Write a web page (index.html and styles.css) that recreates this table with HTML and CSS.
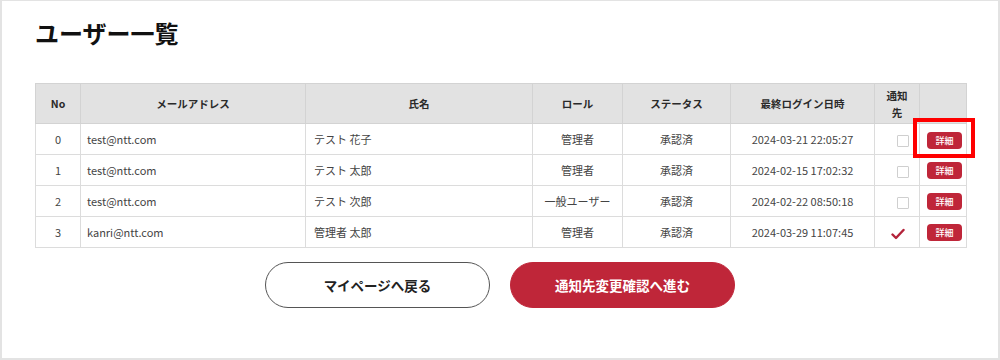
FILE: index.html
```html
<!DOCTYPE html>
<html lang="ja">
<head>
<meta charset="utf-8">
<title>ユーザー一覧</title>
<link rel="stylesheet" href="styles.css">
</head>
<body>
<div class="frame">
  <h1 class="title">ユーザー一覧</h1>
  <table class="users">
    <colgroup>
      <col class="c-no"><col class="c-mail"><col class="c-name"><col class="c-role"><col class="c-status"><col class="c-login"><col class="c-notify"><col class="c-btn">
    </colgroup>
    <thead>
      <tr>
        <th>No</th><th>メールアドレス</th><th>氏名</th><th>ロール</th><th>ステータス</th><th>最終ログイン日時</th><th>通知<br>先</th><th></th>
      </tr>
    </thead>
    <tbody>
      <tr>
        <td class="center">0</td><td class="mail">test@ntt.com</td><td class="name">テスト 花子</td><td class="center">管理者</td><td class="center">承認済</td><td class="center">2024-03-21 22:05:27</td><td class="center"><span class="check"></span></td><td class="btn-cell"><span class="detail-wrap"><button class="detail">詳細</button><span class="highlight"></span></span></td>
      </tr>
      <tr>
        <td class="center">1</td><td class="mail">test@ntt.com</td><td class="name">テスト 太郎</td><td class="center">管理者</td><td class="center">承認済</td><td class="center">2024-02-15 17:02:32</td><td class="center"><span class="check"></span></td><td class="btn-cell"><button class="detail">詳細</button></td>
      </tr>
      <tr>
        <td class="center">2</td><td class="mail">test@ntt.com</td><td class="name">テスト 次郎</td><td class="center">一般ユーザー</td><td class="center">承認済</td><td class="center">2024-02-22 08:50:18</td><td class="center"><span class="check"></span></td><td class="btn-cell"><button class="detail">詳細</button></td>
      </tr>
      <tr>
        <td class="center">3</td><td class="mail">kanri@ntt.com</td><td class="name">管理者 太郎</td><td class="center">管理者</td><td class="center">承認済</td><td class="center">2024-03-29 11:07:45</td><td class="center"><svg class="tick" width="14" height="12" viewBox="0 0 14 12"><path d="M1.5 6.5 L5 10 L12.5 2" fill="none" stroke="#b3233a" stroke-width="2.4" stroke-linecap="round" stroke-linejoin="round"/></svg></td><td class="btn-cell"><button class="detail">詳細</button></td>
      </tr>
    </tbody>
  </table>
  <div class="actions">
    <button class="btn btn-back">マイページへ戻る</button>
    <button class="btn btn-next">通知先変更確認へ進む</button>
  </div>
</div>
</body>
</html>
```

FILE: styles.css
```css
* { box-sizing: border-box; }
html, body { margin: 0; padding: 0; background: #fff; }
body {
  font-family: "Noto Sans CJK JP", "Noto Sans", sans-serif;
  color: #333;
}
.frame {
  width: 1000px;
  height: 360px;
  border: 2px solid #e3e3e3;
  border-top-width: 1px;
  padding: 0 33px;
}
.title {
  margin: 15px 0 0 0;
  font-size: 24px;
  line-height: 34px;
  font-weight: 700;
  color: #111;
}
.users {
  margin-top: 33px;
  border-collapse: collapse;
  table-layout: fixed;
  width: 931px;
  font-size: 11px;
}
.c-no { width: 45px; }
.c-mail { width: 225px; }
.c-name { width: 227px; }
.c-role { width: 90px; }
.c-status { width: 108px; }
.c-login { width: 144px; }
.c-notify { width: 45px; }
.c-btn { width: 47px; }
.users th {
  background: #e2e2e2;
  border: 1px solid #d3d3d3;
  height: 40px;
  font-weight: 700;
  font-size: 10.5px;
  line-height: 17px;
  color: #2a2a2a;
  padding: 0 4px;
  text-align: center;
}
.users td {
  border: 1px solid #dcdcdc;
  height: 31px;
  padding: 0 4px;
  color: #444;
  line-height: 16px;
  vertical-align: middle;
}
.users td.center { text-align: center; }
.users td.mail { padding-left: 6px; }
.users td.name { padding-left: 8px; }
.users td.btn-cell { text-align: left; padding-left: 7px; }
.check {
  display: inline-block;
  width: 12px;
  height: 12px;
  border: 1px solid #cfcfcf;
  border-radius: 1px;
  background: #fff;
  vertical-align: middle;
  margin-left: 12px;
}
.tick { vertical-align: middle; margin-left: 2px; }
.detail-wrap { position: relative; display: inline-block; vertical-align: middle; }
.detail {
  display: inline-block;
  width: 35px;
  height: 17px;
  border: 0;
  border-radius: 4px;
  background: #bf2639;
  color: #fff;
  font-family: "Noto Sans CJK JP", sans-serif;
  font-size: 9px;
  font-weight: 500;
  line-height: 17px;
  padding: 0;
  vertical-align: middle;
}
.highlight {
  position: absolute;
  left: -14px;
  top: -12px;
  width: 62px;
  height: 40px;
  border: 4px solid #ff0000;
  pointer-events: none;
}
.actions {
  display: flex;
  justify-content: center;
  gap: 20px;
  margin-top: 14px;
}
.btn {
  width: 225px;
  height: 46px;
  border-radius: 23px;
  font-family: "Noto Sans CJK JP", sans-serif;
  font-size: 13.5px;
  font-weight: 700;
  cursor: pointer;
}
.btn-back {
  background: #fff;
  border: 1px solid #555;
  color: #222;
}
.btn-next {
  background: #bf2639;
  border: 1px solid #bf2639;
  color: #fff;
}
```
